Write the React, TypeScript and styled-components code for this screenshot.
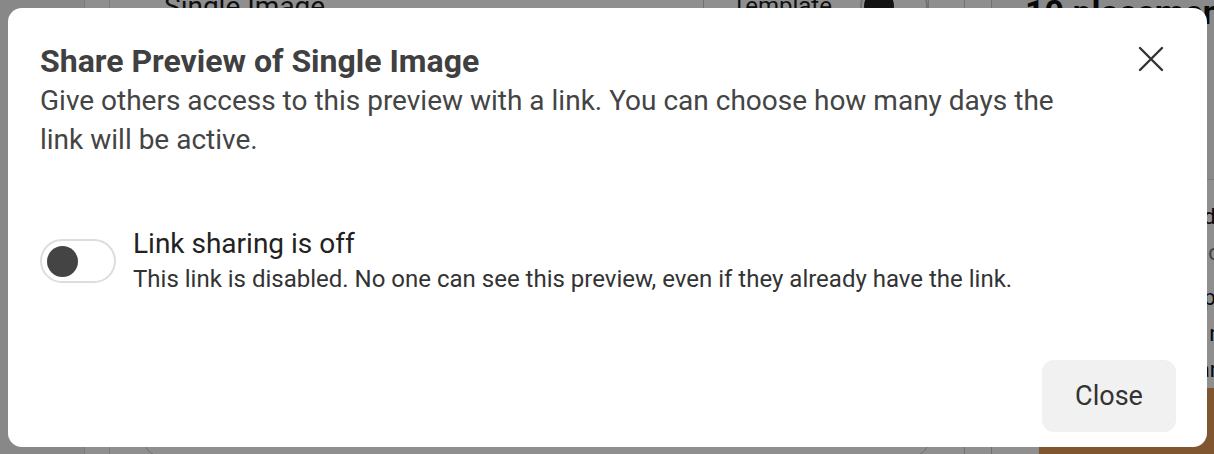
import React from 'react';
import styled, { createGlobalStyle } from 'styled-components';

const GlobalStyle = createGlobalStyle`
  html, body {
    margin: 0;
    padding: 0;
    height: 100%;
    overflow: hidden;
    font-family: Roboto, "Liberation Sans", Arial, sans-serif;
  }
`;

// ---- page underneath the dialog ----

const Page = styled.div`
  display: flex;
  height: 480px;
  margin-top: -24px;
  background: #fff;
`;

const Rail = styled.div`
  width: 84px;
  background: #f2f2f2;
  border-right: 1px solid #ddd;
`;

const SubRail = styled.div`
  width: 24px;
  border-right: 1px solid #ddd;
`;

const Spacer = styled.div`
  width: 33px;
`;

const Main = styled.div`
  flex: 1;
  display: flex;
  flex-direction: column;
  padding-right: 35px;
`;

const MainHeader = styled.div`
  display: flex;
  align-items: center;
  justify-content: space-between;
  height: 60px;
  padding-left: 21px;
`;

const PageTitle = styled.h2`
  margin: 0;
  font-size: 28px;
  font-weight: 400;
  color: #1c1c1c;
`;

const TemplateButton = styled.div`
  display: flex;
  align-items: center;
  gap: 28px;
  width: 226px;
  height: 52px;
  box-sizing: border-box;
  padding-left: 28px;
  border: 1px solid #ccc;
  border-radius: 10px;
  font-size: 24px;
  color: #1c1c1c;
`;

const MiniToggle = styled.div<{ on: boolean }>`
  width: 72px;
  height: 38px;
  border: 2px solid #ccc;
  border-radius: 19px;
  display: flex;
  align-items: center;
  justify-content: ${(p) => (p.on ? 'flex-end' : 'flex-start')};
  padding: 0 2px;
  box-sizing: border-box;
  &::before {
    content: '';
    width: 30px;
    height: 30px;
    border-radius: 50%;
    background: #222;
  }
`;

const Card = styled.div`
  flex: 1;
  margin: 390px 0 0 1px;
  border: 1px solid #ccc;
  border-radius: 24px;
`;

const Divider = styled.div`
  width: 26px;
  border-left: 1px solid #ccc;
  border-right: 1px solid #ccc;
`;

const Side = styled.div`
  width: 222px;
  display: flex;
  flex-direction: column;
  overflow: hidden;
`;

const SideHeader = styled.div`
  height: 215px;
  padding-left: 33px;
  background: #f7f7f7;
  border-bottom: 1px solid #ddd;
`;

const SideTitle = styled.h3`
  margin: 16px 0 0;
  font-size: 34px;
  font-weight: 700;
  color: #111;
  white-space: nowrap;
`;

const SideLine = styled.div<{ muted?: boolean }>`
  padding-left: 33px;
  font-size: 22px;
  line-height: 36px;
  white-space: nowrap;
  color: ${(p) => (p.muted ? '#777' : '#111')};
`;

const SideImage = styled.div`
  margin: auto 0 0 47px;
  height: 72px;
  background: #e39a55;
`;

// ---- dialog ----

const Overlay = styled.div`
  position: fixed;
  inset: 0;
  background: rgba(0, 0, 0, 0.44);
  display: flex;
  padding: 8px 7px 7px 8px;
`;

const Dialog = styled.div`
  flex: 1;
  display: flex;
  flex-direction: column;
  background: #fff;
  border-radius: 14px;
  padding: 33px 31px 15px 32px;
  color: #444;
`;

const Header = styled.div`
  display: flex;
  justify-content: space-between;
  align-items: flex-start;
`;

const TitleBlock = styled.div`
  max-width: 1040px;
`;

const Title = styled.h1`
  margin: 0;
  font-size: 32px;
  line-height: 40px;
  font-weight: 700;
  color: #404040;
`;

const Description = styled.p`
  margin: 0;
  font-size: 28px;
  line-height: 39px;
  color: #444;
`;

const CloseIcon = styled.button`
  border: none;
  background: none;
  padding: 0;
  margin: 3px 10px 0 0;
  width: 30px;
  height: 30px;
  display: flex;
  align-items: center;
  justify-content: center;
  cursor: pointer;
  color: #333;
`;

const Setting = styled.div`
  display: flex;
  align-items: center;
  gap: 17px;
  margin-top: 67px;
`;

const Switch = styled.div<{ on: boolean }>`
  flex-shrink: 0;
  width: 76px;
  height: 44px;
  box-sizing: border-box;
  border: 2px solid #ddd;
  border-radius: 22px;
  display: flex;
  align-items: center;
  justify-content: ${(p) => (p.on ? 'flex-end' : 'flex-start')};
  padding: 0 5px;
  &::before {
    content: '';
    width: 31px;
    height: 31px;
    border-radius: 50%;
    background: #444;
  }
`;

const SettingText = styled.div`
  display: flex;
  flex-direction: column;
`;

const SettingLabel = styled.div`
  font-size: 28px;
  line-height: 36px;
  color: #222;
`;

const SettingHint = styled.div`
  font-size: 24px;
  line-height: 34px;
  color: #333;
`;

const Footer = styled.div`
  margin-top: auto;
  display: flex;
  justify-content: flex-end;
`;

const Button = styled.button`
  width: 134px;
  height: 72px;
  border: none;
  border-radius: 12px;
  background: #f1f1f1;
  font-family: inherit;
  font-size: 27px;
  color: #333;
  cursor: pointer;
`;

export default function App() {
  return (
    <>
      <GlobalStyle />
      <Page>
        <Rail />
        <SubRail />
        <Spacer />
        <Main>
          <MainHeader>
            <PageTitle>Single Image</PageTitle>
            <TemplateButton>
              Template
              <MiniToggle on={false} />
            </TemplateButton>
          </MainHeader>
          <Card />
        </Main>
        <Divider />
        <Side>
          <SideHeader>
            <SideTitle>10 placements</SideTitle>
          </SideHeader>
          <div style={{ height: 20 }} />
          <SideLine>Facebook Feed and more</SideLine>
          <SideLine muted>Recommended placement</SideLine>
          <div style={{ height: 10 }} />
          <SideLine>Instagram Stories plus more</SideLine>
          <SideLine>Audience Network native</SideLine>
          <SideLine>Messenger inbox and more</SideLine>
          <SideImage />
        </Side>
      </Page>
      <Overlay>
        <Dialog role="dialog" aria-labelledby="share-title">
          <Header>
            <TitleBlock>
              <Title id="share-title">Share Preview of Single Image</Title>
              <Description>
                Give others access to this preview with a link. You can choose how many days the link will be
                active.
              </Description>
            </TitleBlock>
            <CloseIcon aria-label="Close">
              <svg width="26" height="26" viewBox="0 0 26 26" fill="none">
                <path d="M2 2 L24 24 M24 2 L2 24" stroke="currentColor" strokeWidth="2.4" strokeLinecap="round" />
              </svg>
            </CloseIcon>
          </Header>
          <Setting>
            <Switch on={false} />
            <SettingText>
              <SettingLabel>Link sharing is off</SettingLabel>
              <SettingHint>
                This link is disabled. No one can see this preview, even if they already have the link.
              </SettingHint>
            </SettingText>
          </Setting>
          <Footer>
            <Button>Close</Button>
          </Footer>
        </Dialog>
      </Overlay>
    </>
  );
}
